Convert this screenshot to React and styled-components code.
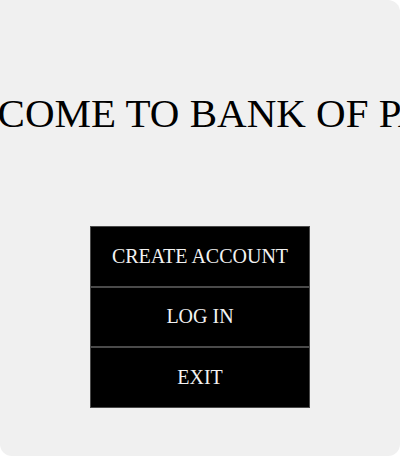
import React from 'react'
import styled, { createGlobalStyle } from 'styled-components'

const GlobalStyle = createGlobalStyle`
  html, body {
    margin: 0;
    padding: 0;
    background: #ffffff;
  }
  body {
    font-family: "Liberation Serif", "Times New Roman", serif;
  }
`

const Screen = styled.div`
  width: 400px;
  height: 456px;
  box-sizing: border-box;
  background: #f0f0f0;
  border-radius: 0 12px 12px 12px;
  overflow: hidden;
  display: flex;
  flex-direction: column;
  align-items: center;
  padding-top: 91px;
`

const Title = styled.h1`
  margin: 0;
  font-size: 41px;
  font-weight: 400;
  line-height: 45px;
  color: #000;
  white-space: nowrap;
`

const Menu = styled.div`
  margin-top: 90px;
  width: 220px;
  display: flex;
  flex-direction: column;
`

const MenuButton = styled.button`
  height: 60.67px;
  box-sizing: border-box;
  background: #000;
  color: #f2f2f2;
  border: 1px solid #4a4a4a;
  font-family: "Liberation Serif", "Times New Roman", serif;
  font-size: 20px;
  cursor: pointer;
  padding: 0;
`

export default function App() {
  return (
    <>
      <GlobalStyle />
      <Screen>
        <Title>WELCOME TO BANK OF PARIS</Title>
        <Menu>
          <MenuButton>CREATE ACCOUNT</MenuButton>
          <MenuButton>LOG IN</MenuButton>
          <MenuButton>EXIT</MenuButton>
        </Menu>
      </Screen>
    </>
  )
}
